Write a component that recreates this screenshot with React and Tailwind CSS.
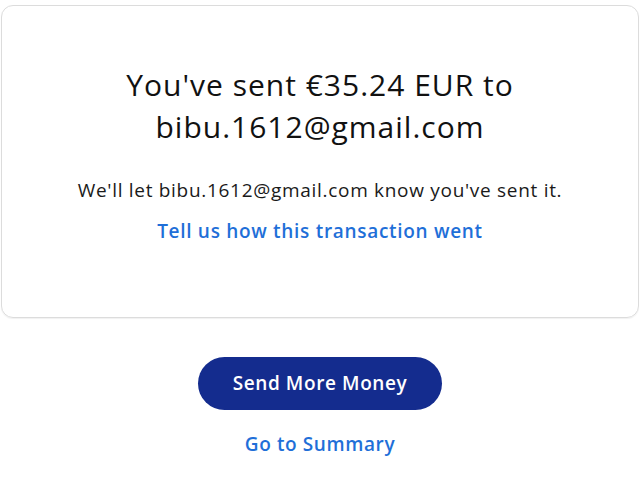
// Payment confirmation screen
import React from "react";

const App = () => {
  return (
    <div className="w-[640px] h-[490px] bg-white font-['Open_Sans','Noto_Sans',sans-serif] text-[#111]">
      {/* ── CARD ─────────────────────────────── */}
      <div className="mx-[1px] mt-[5px] h-[313px] rounded-[12px] border border-[#dcdcdc] shadow-[0_1px_1px_rgba(0,0,0,0.06)] flex flex-col items-center pt-[58px]">
        <h1 className="text-[30px] leading-[42px] font-normal text-center text-[#111] tracking-[1px]">
          You've sent €35.24 EUR to
          <br />
          bibu.1612@gmail.com
        </h1>
        <p className="mt-[30px] text-[19px] leading-[24px] text-[#1a1a1a] tracking-[0.7px]">
          We'll let bibu.1612@gmail.com know you've sent it.
        </p>
        <a className="mt-[17px] text-[19px] leading-[24px] font-semibold text-[#1f6fd8] cursor-pointer tracking-[0.7px]">
          Tell us how this transaction went
        </a>
      </div>

      {/* ── ACTIONS ──────────────────────────── */}
      <div className="flex flex-col items-center pt-[39px]">
        <button className="w-[244px] h-[53px] rounded-full bg-[#142c8e] text-white text-[19px] font-semibold tracking-[0.6px]">
          Send More Money
        </button>
        <a className="mt-[22px] text-[19px] leading-[24px] font-semibold text-[#1f6fd8] cursor-pointer tracking-[0.6px]">
          Go to Summary
        </a>
      </div>
    </div>
  );
};

export default App;
